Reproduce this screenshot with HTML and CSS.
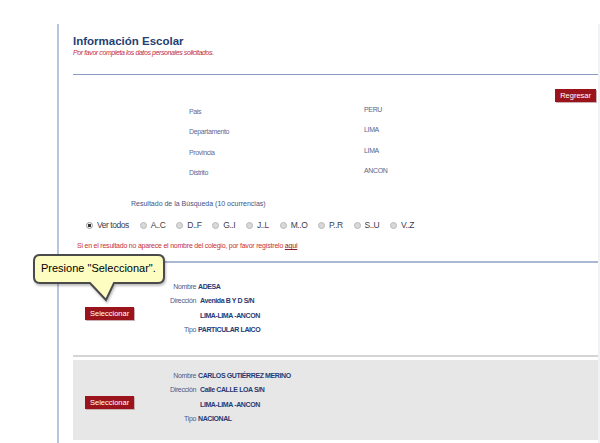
FILE: index.html
```html
<!DOCTYPE html>
<html lang="es">
<head>
  <meta charset="UTF-8">
  <title>Información Escolar</title>
  <link rel="stylesheet" href="styles.css">
</head>
<body>
<div class="page">
  <div class="head">
    <h1>Información Escolar</h1>
    <p class="sub">Por favor completa los datos personales solicitados.</p>
  </div>

  <div class="tools"><a class="btn">Regresar</a></div>

  <div class="info">
    <span class="lbl">Pais</span><span class="val">PERU</span>
    <span class="lbl">Departamento</span><span class="val">LIMA</span>
    <span class="lbl">Provincia</span><span class="val">LIMA</span>
    <span class="lbl">Distrito</span><span class="val">ANCON</span>
  </div>

  <p class="count">Resultado de la Búsqueda (10 ocurrencias)</p>

  <div class="letters">
    <label><span class="radio on"></span>Ver todos</label>
    <label><span class="radio"></span>A..C</label>
    <label><span class="radio"></span>D..F</label>
    <label><span class="radio"></span>G..I</label>
    <label><span class="radio"></span>J<span class="hot">..L</span></label>
    <label><span class="radio"></span>M..O</label>
    <label><span class="radio"></span>P..R</label>
    <label><span class="radio"></span>S..U</label>
    <label><span class="radio"></span>V..Z</label>
  </div>

  <p class="note">Si en el resultado no aparece el nombre del colegio, por favor regístrelo <a>aqui</a></p>

  <div class="results">
    <div class="school">
      <div class="pick"><a class="btn">Seleccionar</a></div>
      <div class="data">
        <span class="lbl">Nombre</span><b>ADESA</b>
        <span class="lbl">Dirección</span><b class="ind">Avenida B Y D S/N</b>
        <span></span><b class="ind">LIMA-LIMA -ANCON</b>
        <span class="lbl">Tipo</span><b>PARTICULAR LAICO</b>
      </div>
    </div>
    <div class="school alt">
      <div class="pick"><a class="btn">Seleccionar</a></div>
      <div class="data">
        <span class="lbl">Nombre</span><b>CARLOS GUTIÉRREZ MERINO</b>
        <span class="lbl">Dirección</span><b class="ind">Calle CALLE LOA S/N</b>
        <span></span><b class="ind">LIMA-LIMA -ANCON</b>
        <span class="lbl">Tipo</span><b>NACIONAL</b>
      </div>
    </div>
  </div>
</div>

<!-- globo de ayuda -->
<div class="tip">
  <svg width="136" height="50" viewBox="0 0 136 50">
    <path d="M7,1 H125 Q131,1 131,7 V23 Q131,29 125,29 H81 L73,46 L57,29 H7 Q1,29 1,23 V7 Q1,1 7,1 Z" fill="#fdfdc2" stroke="#4a4a4a" stroke-width="2"/>
  </svg>
  <span>Presione "Seleccionar".</span>
</div>
</body>
</html>
```

FILE: styles.css
```css
body {
    margin: 0;
    height: 443px;
    overflow: hidden;
    background: #fff;
    font-family: "Liberation Sans", Arial, sans-serif;
}

.page {
    margin: 24px 0 0 57px;
    padding-left: 14px;
    min-height: 419px;
    border-left: 2px solid #b9c5dc;
    border-right: 2px solid #f1f2f4;
}

.head {
    padding: 10px 0 17px;
    border-bottom: 1px solid #8a9dc2;
}

h1 {
    margin: 0;
    font-size: 11.5px;
    line-height: 14px;
    color: #1f4172;
}

.sub {
    margin: 0;
    font-size: 7px;
    line-height: 9px;
    letter-spacing: -0.4px;
    font-style: italic;
    color: #c42a3a;
}

.btn {
    display: inline-block;
    padding: 0 5px;
    height: 13px;
    line-height: 13px;
    font-size: 7.5px;
    color: #fff;
    background: #9c141b;
    box-shadow: 1px 1px 0 #c9b0b2;
}

.tools {
    margin-top: 9px;
    text-align: right;
    padding-right: 2px;
    height: 13px;
}

.info {
    display: grid;
    grid-template-columns: 175px auto;
    grid-auto-rows: 20.3px;
    margin-top: 8px;
    padding-left: 116px;
    font-size: 7px;
    line-height: 10px;
    letter-spacing: -0.35px;
    color: #5a6a98;
}

.info .lbl {
    padding-top: 2px;
}

.info .val {
    color: #5d6684;
}

.count {
    margin: 13px 0 0 58px;
    font-size: 7px;
    line-height: 10px;
    color: #3f5283;
}

.letters {
    display: flex;
    margin: 10px 0 0 13px;
    font-size: 8.5px;
    line-height: 12px;
    letter-spacing: -0.45px;
    color: #3a3d4e;
}

.letters label {
    display: flex;
    align-items: center;
    margin-right: 10.8px;
}

.radio {
    width: 7px;
    height: 7px;
    margin-right: 4px;
    border-radius: 50%;
    box-sizing: border-box;
    border: 1px solid #b8b8b8;
    background: #d9d9d9;
}

.radio.on {
    background: radial-gradient(circle, #333 0 1.5px, #f4f4f4 2px);
    border-color: #9a9a9a;
}

.hot {
    color: #9b2a3c;
}

.note {
    margin: 10px 0 0 4px;
    padding-bottom: 10px;
    font-size: 7px;
    line-height: 10px;
    letter-spacing: -0.22px;
    color: #c6303a;
    border-bottom: 2px solid #abb8d4;
}

.note a {
    color: #8b1a22;
    text-decoration: underline;
}

.school {
    display: flex;
    align-items: center;
    padding: 16.5px 0 17.5px;
    border-bottom: 2px solid #d5d5d5;
}

.school.alt {
    margin-top: 3px;
    padding: 8.5px 0 13.5px;
    background: #e7e7e7;
    border-bottom: 0;
}

.pick {
    width: 65px;
    padding: 5px 0 0 12px;
}

.data {
    display: grid;
    grid-template-columns: 46px auto;
    grid-auto-rows: 14.5px;
    column-gap: 2px;
    font-size: 7px;
    line-height: 14.5px;
    letter-spacing: -0.35px;
}

.data .lbl {
    text-align: right;
    color: #4d5c8c;
}

.data b {
    color: #283a74;
    letter-spacing: -0.4px;
}

.data .ind {
    padding-left: 2px;
}

.tip {
    position: absolute;
    left: 33px;
    top: 254px;
    width: 136px;
    height: 50px;
}

.tip svg {
    display: block;
    filter: drop-shadow(1px 2px 1px rgba(0, 0, 0, 0.25));
}

.tip span {
    position: absolute;
    left: 8px;
    top: 7.5px;
    font-size: 11px;
    line-height: 13px;
    color: #000;
    white-space: nowrap;
}
```
